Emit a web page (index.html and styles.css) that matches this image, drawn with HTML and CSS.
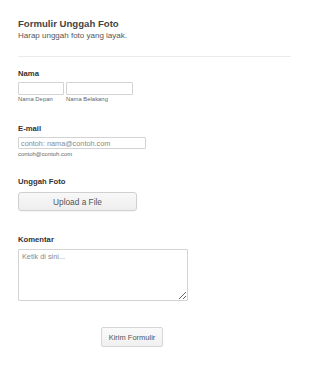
FILE: index.html
```html
<!DOCTYPE html>
<html lang="id">
  <head>
    <meta charset="UTF-8" />
    <meta name="viewport" content="width=device-width, initial-scale=1.0" />
    <title>Formulir Unggah Foto</title>
    <link rel="stylesheet" href="styles.css">
  </head>
  <body>
    <form id="photoForm">
      <!-- HEADER -->
      <div class="formHeader">
        <div class="formTitle">Formulir Unggah Foto</div>
        <div class="formSubtitle">Harap unggah foto yang layak.</div>
      </div>

      <!-- Nama -->
      <div class="field fieldName">
        <label class="fieldLabel">Nama</label>
        <div class="nameRow">
          <div class="nameCol">
            <input type="text" class="textInput firstName" />
            <span class="subLabel">Nama Depan</span>
          </div>
          <div class="nameCol">
            <input type="text" class="textInput lastName" />
            <span class="subLabel">Nama Belakang</span>
          </div>
        </div>
      </div>

      <!-- E-mail -->
      <div class="field fieldEmail">
        <label class="fieldLabel">E-mail</label>
        <input type="email" class="textInput emailInput" placeholder="contoh: nama@contoh.com" />
        <span class="subLabel">contoh@contoh.com</span>
      </div>

      <!-- Unggah Foto -->
      <div class="field fieldUpload">
        <label class="fieldLabel">Unggah Foto</label>
        <button type="button" class="uploadButton">Upload a File</button>
      </div>

      <!-- Komentar -->
      <div class="field fieldComment">
        <label class="fieldLabel">Komentar</label>
        <textarea class="commentInput" placeholder="Ketik di sini..."></textarea>
      </div>

      <div class="submitRow">
        <button type="submit" class="submitButton">Kirim Formulir</button>
      </div>
    </form>
  </body>
</html>
```

FILE: styles.css
```css
body {
  margin: 0;
  background-color: #fff;
  font-family: "Liberation Sans", Arial, sans-serif;
  color: #333;
}

#photoForm {
  width: 273px;
  padding: 18px 19px 0 18px;
}

.formHeader {
  padding-bottom: 15px;
  border-bottom: 1px solid #eaeaea;
}

.formTitle {
  font-size: 9.6px;
  line-height: 12px;
  font-weight: bold;
  color: #444;
}

.formSubtitle {
  margin-top: 1px;
  font-size: 8px;
  line-height: 10px;
  color: #555;
}

.field {
  display: flex;
  flex-direction: column;
  align-items: flex-start;
}

.fieldName {
  margin-top: 12px;
}

.fieldEmail {
  margin-top: 21px;
}

.fieldUpload {
  margin-top: 19px;
}

.fieldComment {
  margin-top: 24px;
}

.fieldLabel {
  font-size: 7.7px;
  line-height: 10px;
  font-weight: bold;
  color: #333;
  margin-bottom: 3px;
}

.nameRow {
  display: flex;
  gap: 2px;
}

.nameCol {
  display: flex;
  flex-direction: column;
}

.textInput {
  box-sizing: border-box;
  margin: 0;
  padding: 0 2px;
  height: 13px;
  border: 1px solid #d3d3d3;
  border-radius: 1px;
  font-family: "Liberation Sans", Arial, sans-serif;
  font-size: 7.3px;
  color: #555;
  background: #fff;
}

.firstName {
  width: 46px;
}

.lastName {
  width: 67px;
}

.emailInput {
  width: 128px;
  height: 12px;
}

.textInput::placeholder,
.commentInput::placeholder {
  color: #8a8a8a;
}

.subLabel {
  font-size: 5.9px;
  line-height: 8px;
  color: #666;
}

.fieldEmail .subLabel {
  margin-top: 1px;
}

.uploadButton {
  box-sizing: border-box;
  width: 119px;
  height: 19px;
  margin: 2px 0 0 0;
  padding: 0;
  border: 1px solid #d0d0d0;
  border-radius: 3px;
  background: linear-gradient(#f8f8f8, #eeeeee);
  font-family: "Liberation Sans", Arial, sans-serif;
  font-size: 8.3px;
  color: #555;
  box-shadow: 0 1px 1px rgba(0, 0, 0, 0.04);
}

.commentInput {
  box-sizing: border-box;
  width: 170px;
  height: 52px;
  margin: 1px 0 0 0;
  padding: 2px 3px;
  border: 1px solid #d3d3d3;
  border-radius: 1px;
  font-family: "Liberation Sans", Arial, sans-serif;
  font-size: 7.3px;
  color: #555;
}

.submitRow {
  display: flex;
  padding-left: 83px;
  margin-top: 26px;
}

.submitButton {
  box-sizing: border-box;
  width: 62px;
  height: 20px;
  margin: 0;
  padding: 0;
  border: 1px solid #d6d6d6;
  border-radius: 2px;
  background: linear-gradient(#fafafa, #f0f0f0);
  font-family: "Liberation Sans", Arial, sans-serif;
  font-size: 7.5px;
  color: #555;
  box-shadow: 0 1px 1px rgba(0, 0, 0, 0.05);
}
```
